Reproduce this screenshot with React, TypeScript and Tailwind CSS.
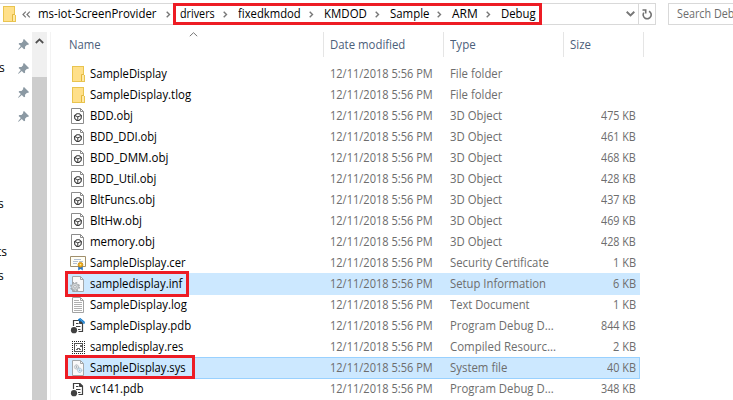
import { useLayoutEffect, useRef, useState } from "react";
import type { ReactNode } from "react";

type Kind = "folder" | "obj" | "cer" | "inf" | "log" | "pdb" | "vcpdb" | "res" | "sys";
type FileRow = { kind: Kind; name: string; w: number; type: string; tw: number; size?: string; sw?: number; mark?: string };

const files: FileRow[] = [
  { kind: "folder", name: "SampleDisplay", w: 77, type: "File folder", tw: 52 },
  { kind: "folder", name: "SampleDisplay.tlog", w: 101, type: "File folder", tw: 52 },
  { kind: "obj", name: "BDD.obj", w: 43, type: "3D Object", tw: 52, size: "475 KB", sw: 35 },
  { kind: "obj", name: "BDD_DDI.obj", w: 67, type: "3D Object", tw: 52, size: "461 KB", sw: 35 },
  { kind: "obj", name: "BDD_DMM.obj", w: 78, type: "3D Object", tw: 52, size: "468 KB", sw: 35 },
  { kind: "obj", name: "BDD_Util.obj", w: 66, type: "3D Object", tw: 52, size: "428 KB", sw: 35 },
  { kind: "obj", name: "BltFuncs.obj", w: 65, type: "3D Object", tw: 52, size: "437 KB", sw: 35 },
  { kind: "obj", name: "BltHw.obj", w: 52, type: "3D Object", tw: 52, size: "469 KB", sw: 35 },
  { kind: "obj", name: "memory.obj", w: 65, type: "3D Object", tw: 52, size: "428 KB", sw: 35 },
  { kind: "cer", name: "SampleDisplay.cer", w: 96, type: "Security Certificate", tw: 99, size: "1 KB", sw: 23 },
  { kind: "inf", name: "sampledisplay.inf", w: 92, type: "Setup Information", tw: 96, size: "6 KB", sw: 23, mark: "w-[124px] h-[26px] -top-[2px]" },
  { kind: "log", name: "SampleDisplay.log", w: 97, type: "Text Document", tw: 80, size: "1 KB", sw: 23 },
  { kind: "pdb", name: "SampleDisplay.pdb", w: 101, type: "Program Debug D...", tw: 104, size: "844 KB", sw: 35 },
  { kind: "res", name: "sampledisplay.res", w: 93, type: "Compiled Resourc...", tw: 106, size: "2 KB", sw: 23 },
  { kind: "sys", name: "SampleDisplay.sys", w: 96, type: "System file", tw: 57, size: "40 KB", sw: 29, mark: "w-[130px] h-[24px] -top-[2px]" },
  { kind: "vcpdb", name: "vc141.pdb", w: 54, type: "Program Debug D...", tw: 104, size: "348 KB", sw: 35 },
];

// A label condensed to the given advance width.
function Label({ w, children }: { w: number; children: ReactNode }) {
  const ref = useRef<HTMLSpanElement>(null);
  const [scale, setScale] = useState(1);
  useLayoutEffect(() => {
    if (ref.current) setScale(w / ref.current.offsetWidth);
  }, [w]);
  return (
    <span className="block shrink-0" style={{ width: w }}>
      <span ref={ref} className="inline-block origin-left whitespace-nowrap" style={{ transform: `scaleX(${scale})` }}>
        {children}
      </span>
    </span>
  );
}

function Folder() {
  return (
    <>
      <path d="M2 0h12v9h1v7H2z" fill="#e9c44f" />
      <path d="M3 1h10v14H3z" fill="#ffe08a" />
      <path d="M12 9h2v6h-2z" fill="#ffe9a6" />
      <path d="M11.5 15V8.5h2" fill="none" stroke="#e3b83f" />
    </>
  );
}

function Page({ fill = "#fff", stroke = "#8a8a8a" }: { fill?: string; stroke?: string }) {
  return (
    <>
      <path d="M2.5.5h8l3 3v12h-11z" fill={fill} stroke={stroke} />
      <path d="M10.5.5v3h3" fill="none" stroke={stroke} />
    </>
  );
}

function Pdb() {
  return (
    <>
      <path d="M3.5 8V2.5H10l2.5 2.5v8.5H8.5" fill="#fff" stroke="#404040" strokeWidth="1.2" />
      <path d="M9.5 2.5v3h3z" fill="#404040" stroke="#404040" />
      <path d="M6 5.5h2.5M6 8.5h4.5M8 11.5h2.5" stroke="#404040" />
      <circle cx="4" cy="12.2" r="3.1" fill="#404040" />
    </>
  );
}

function FileIcon({ kind }: { kind: Kind }) {
  return (
    <svg viewBox="0 0 16 16" className="h-4 w-4 shrink-0">
      {kind === "folder" && <Folder />}
      {kind === "obj" && (
        <>
          <path d="M1.5.5h9l3 3v12h-12z" fill="#fff" stroke="#8c8c8c" />
          <path d="M10.5.5v3h3" fill="none" stroke="#8c8c8c" />
          <path d="M6.9 5.7h2.4l2.1 2-.3 2.9-2.2 1.9H6.8l-2-1.9-.3-2.8z" fill="#fff" stroke="#3a3a3a" strokeWidth="1.1" />
          <path d="M5 7.7l2.8 1.1 3.2-1.2M7.8 8.8v3.4" fill="none" stroke="#3a3a3a" />
        </>
      )}
      {kind === "cer" && (
        <>
          <path d="M.5 1.5h15v10H.5z" fill="#fffef5" stroke="#a08f6c" />
          <path d="M4 4.5h7M3 6.5h5M9 6.5h4M3 8.5h4" stroke="#b3c0d3" />
          <path d="M8.2 10.5h4.6v5l-2.3-1.4-2.3 1.4z" fill="#2876c8" />
          <circle cx="10.5" cy="9.8" r="2.4" fill="#efaa18" stroke="#c88a10" strokeWidth=".8" />
          <circle cx="10.5" cy="9.8" r=".8" fill="#fff0a6" />
        </>
      )}
      {kind === "inf" && (
        <>
          <Page fill="#f9f9f9" stroke="#a2a7aa" />
          <circle cx="5" cy="10.8" r="4.2" fill="none" stroke="#9a9fa3" strokeWidth="1.4" strokeDasharray="1.8 1.5" />
          <circle cx="5" cy="10.8" r="3.4" fill="#d4d8da" stroke="#a2a7aa" strokeWidth=".8" />
          <circle cx="5" cy="10.8" r="1.3" fill="#fff" stroke="#9a9fa3" strokeWidth=".8" />
        </>
      )}
      {kind === "log" && (
        <>
          <Page stroke="#a2a2a2" />
          <path d="M4 3.5h5M4 5.5h8M4 7.5h8M4 9.5h8M4 11.5h8M4 13.5h8" stroke="#b0b0b0" />
        </>
      )}
      {(kind === "pdb" || kind === "vcpdb") && <Pdb />}
      {kind === "pdb" && (
        <>
          <path d="M8 1.2L10.3 0l1.5 1.2 2.8 2.4.4 2-2.2.2-.8-2L8.6 3z" fill="#1479c9" />
          <path d="M10 1l4 3.8" stroke="#69b6ec" strokeWidth=".6" />
        </>
      )}
      {kind === "res" && (
        <g shapeRendering="crispEdges">
          <path d="M2 2.5h13M2 14.5h13M2.5 2v13M14.5 2v13" fill="none" stroke="#222" strokeDasharray="1 1" />
          <path d="M4.5 4.5h8v8h-8z" fill="#fff" stroke="#555" />
          <path d="M6 10h1v-1h2v1h2M6 6h1M10 6h1v1h-1z" fill="none" stroke="#666" />
        </g>
      )}
      {kind === "sys" && (
        <>
          <Page fill="#f9f9f9" stroke="#a2a7aa" />
          <circle cx="6.5" cy="7" r="2.1" fill="#e4e8eb" stroke="#a2abb2" strokeDasharray="1 .4" />
          <circle cx="6.5" cy="7" r=".7" fill="#919ba4" />
          <circle cx="9.7" cy="10.3" r="2.1" fill="#e2f0f9" stroke="#8fb3cc" strokeDasharray="1 .4" />
          <circle cx="9.7" cy="10.3" r=".7" fill="#84a9c3" />
        </>
      )}
    </svg>
  );
}

function Pin() {
  return (
    <svg viewBox="0 0 11 11" className="h-[11px] w-[11px]" fill="#8b99a3">
      <path d="M6 0l5 5-1 1-1-.2-2 2 .1 2L6 10.3 3.8 8.1.6 10.8 0 10.4 2.8 7.1.6 5l.7-1 2.2.1L5.3 2 5 1z" />
    </svg>
  );
}

function Chevron() {
  return (
    <svg viewBox="0 0 5 7" className="h-[7px] w-[5px] shrink-0">
      <path d="M.7.7l2.8 2.8L.7 6.3" fill="none" stroke="#777" strokeWidth="1.4" />
    </svg>
  );
}

const crumbs = [
  { text: "drivers", w: 35, cls: "w-[58px]" },
  { text: "fixedkmdod", w: 63, cls: "w-[86px]" },
  { text: "KMDOD", w: 43, cls: "w-[66px]" },
  { text: "Sample", w: 39, cls: "w-[62px]" },
  { text: "ARM", w: 26, cls: "w-[49px]" },
];

function AddressBar() {
  return (
    <div className="flex h-8 w-full pt-[3px]">
      <div className="flex h-[22px] w-[656px] shrink-0 border-y border-r border-[#d9d9d9]">
        <div className="flex w-[173px] items-center">
          <svg viewBox="0 0 16 16" className="ml-px h-4 w-4 shrink-0"><Folder /></svg>
          <svg viewBox="0 0 9 7" className="ml-[5px] h-[7px] w-[9px]" fill="none" stroke="#777" strokeWidth="1.2">
            <path d="M3.8.7L1 3.5l2.8 2.8M7.8.7L5 3.5l2.8 2.8" />
          </svg>
          <div className="ml-[7px] flex w-[128px] items-center text-black"><Label w={119}>ms-iot-ScreenProvider</Label></div>
          <Chevron />
        </div>
        <div className="relative flex w-[369px] items-center pl-[7px] text-black">
          {crumbs.map((c) => (
            <div key={c.text} className={`flex items-center justify-between pr-[10px] ${c.cls}`}>
              <Label w={c.w}>{c.text}</Label>
              <Chevron />
            </div>
          ))}
          <Label w={35}>Debug</Label>
          <div className="absolute -top-px left-0 h-[22px] w-full border-[3px] border-[#ed1c24]" />
        </div>
        <div className="flex flex-1 items-center justify-end pr-[3px]">
          <svg viewBox="0 0 9 6" className="h-[6px] w-[9px]"><path d="M.7.8l3.8 3.7L8.3.8" fill="none" stroke="#777" strokeWidth="1.9" /></svg>
        </div>
        <div className="flex w-[17px] shrink-0 items-center justify-center border-l border-[#d9d9d9]">
          <svg viewBox="0 0 10 11" className="h-[11px] w-[10px]" fill="none" stroke="#737373" strokeWidth="1.6">
            <path d="M7 2.2A4 4 0 1 1 1.8 3.6M.5 1h3.2v3.6" />
          </svg>
        </div>
      </div>
      <div className="ml-3 flex h-[22px] flex-1 items-center overflow-hidden border-y border-l border-[#d9d9d9] pl-2 text-[#6d6d6d]">
        <Label w={70}>Search Debug</Label>
      </div>
    </div>
  );
}

function Sidebar() {
  return (
    <div className="flex w-8 shrink-0 flex-col overflow-hidden text-black">
      {["", "s", "", ""].map((t, i) => (
        <div key={i} className="flex h-6 shrink-0 items-center justify-between pr-[3.5px]">
          <span className="-ml-px">{t}</span>
          <Pin />
        </div>
      ))}
      <div className="h-16 shrink-0" />
      {["s", "", "ts", "s"].map((t, i) => (
        <div key={i} className="flex h-6 shrink-0 items-center"><span className={t === "ts" ? "-ml-[3px]" : "-ml-[2px]"}>{t}</span></div>
      ))}
    </div>
  );
}

function Row({ f }: { f: FileRow }) {
  const bg = f.kind === "inf" ? "bg-[#cce8ff]" : f.kind === "sys" ? "bg-[#cce8ff] outline outline-1 -outline-offset-1 outline-[#99d1ff]" : "";
  return (
    <div className="relative h-[21px] shrink-0">
      <div className={`flex h-[22px] w-[575px] items-center ${bg}`}>
        <div className="flex w-[265px] items-center gap-[4px] pl-[5px] text-black">
          <FileIcon kind={f.kind} />
          <Label w={f.w}>{f.name}</Label>
        </div>
        <div className="w-[120px]"><Label w={103}>12/11/2018 5:56 PM</Label></div>
        <div className="w-[120px]"><Label w={f.tw}>{f.type}</Label></div>
        <div className="flex w-[65.5px] justify-end">{f.size && <Label w={f.sw ?? 0}>{f.size}</Label>}</div>
      </div>
      {f.mark && <div className={`absolute left-0 border-[3px] border-[#ed1c24] ${f.mark}`} />}
    </div>
  );
}

export default function App() {
  return (
    <div className="flex h-[400px] w-[733px] flex-col overflow-hidden bg-white font-['Open_Sans','Noto_Sans',sans-serif] text-[12px] leading-[18px] text-[#6d6d6d]">
      <AddressBar />
      <div className="flex min-h-0 flex-1">
        <Sidebar />
        <div className="flex w-[15px] shrink-0 flex-col bg-[#f0f0f0]">
          <div className="flex h-[45px] justify-center pt-[6px]">
            <svg viewBox="0 0 9 6" className="h-[6px] w-[9px]"><path d="M.8 5l3.7-3.6L8.2 5" fill="none" stroke="#505050" strokeWidth="1.8" /></svg>
          </div>
          <div className="flex-1 bg-[#cdcdcd]" />
        </div>
        <div className="w-[4px] shrink-0 border-r border-[#f3f3f3]" />
        <div className="flex min-w-0 flex-1 flex-col">
          <div className="flex h-[25px] shrink-0 text-[#4c607a]">
            <div className="relative flex w-[273px] items-center border-r border-[#e5e5e5] pl-[18px]">
              <Label w={32}>Name</Label>
              <svg viewBox="0 0 9 5" className="absolute left-[138px] top-0 h-[5px] w-[9px]"><path d="M.8 4.2l3.7-3.5 3.7 3.5" fill="none" stroke="#777" /></svg>
            </div>
            <div className="flex w-[120px] items-center border-r border-[#e5e5e5] pl-[6px]"><Label w={75}>Date modified</Label></div>
            <div className="flex w-[120px] items-center border-r border-[#e5e5e5] pl-[6px]"><Label w={26}>Type</Label></div>
            <div className="flex w-[80px] items-center border-r border-[#e5e5e5] pl-[6px]"><Label w={21}>Size</Label></div>
          </div>
          <div className="flex flex-col pl-[14px] pt-[6px]">
            {files.map((f) => <Row key={f.name} f={f} />)}
          </div>
        </div>
      </div>
    </div>
  );
}
